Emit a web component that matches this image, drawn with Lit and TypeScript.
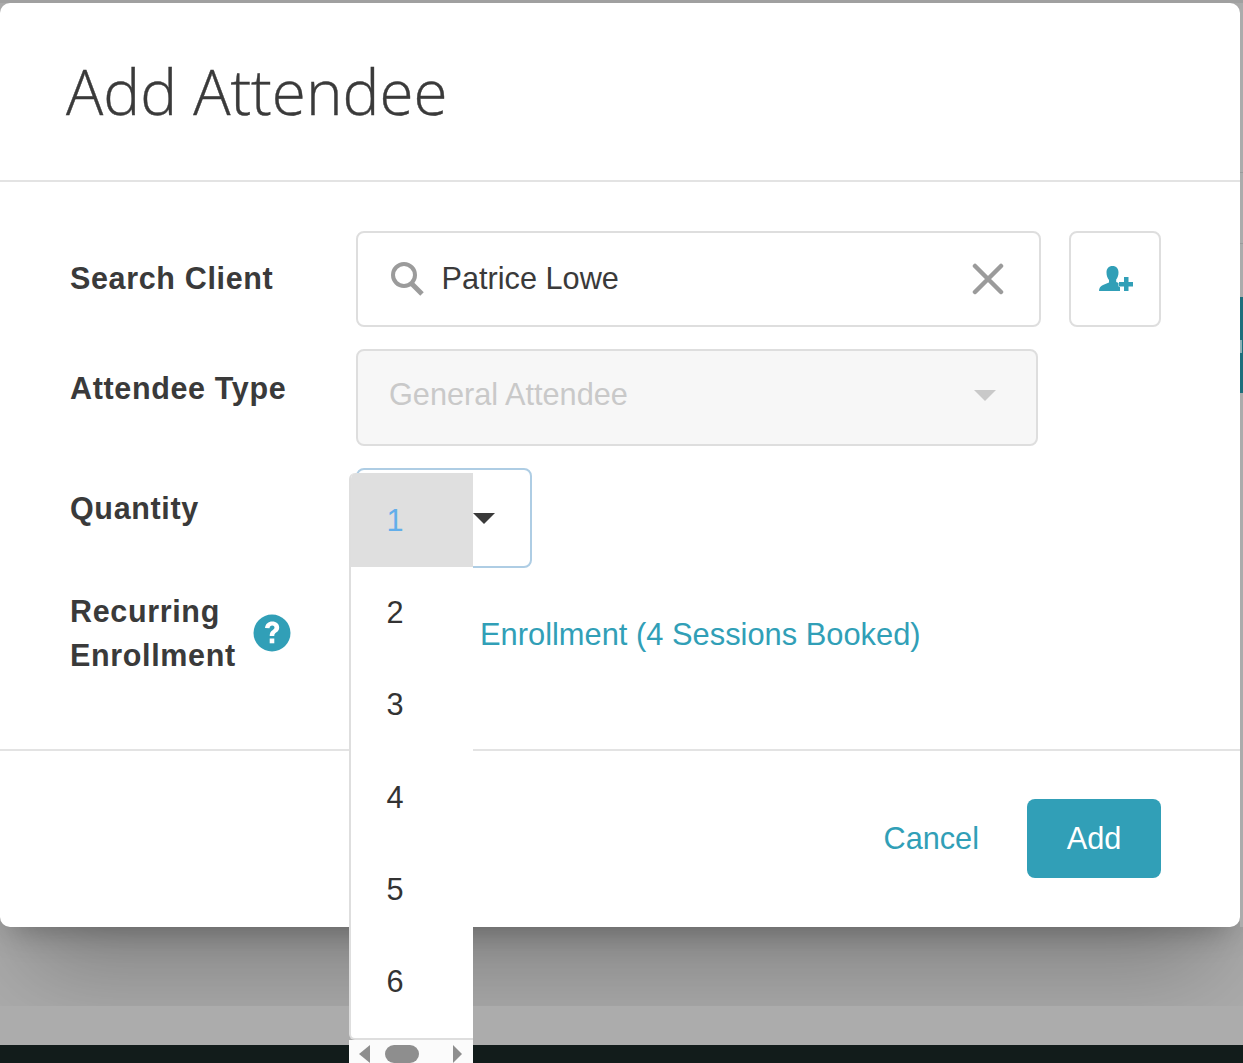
import { LitElement, css, html } from 'lit'
import { customElement } from 'lit/decorators.js'

const QUANTITIES = [1, 2, 3, 4, 5, 6]

@customElement('app-root')
export class AppRoot extends LitElement {
  static styles = css`
    :host {
      display: block;
      position: relative;
      width: 1243px;
      height: 1063px;
      overflow: hidden;
      background: #acacac;
      font-family: 'Liberation Sans', Arial, sans-serif;
      color: #3a3a3a;
    }

    .page {
      display: flex;
      flex-direction: column;
      height: 100%;
      padding-top: 3px;
      box-sizing: border-box;
    }

    .modal {
      position: relative;
      z-index: 1;
      width: 1240px;
      height: 924px;
      flex: none;
      box-sizing: border-box;
      background: #fff;
      border-radius: 10px;
      box-shadow:
        0 12px 30px -10px rgba(0, 0, 0, 0.3),
        0 70px 90px -25px rgba(0, 0, 0, 0.24);
      display: flex;
      flex-direction: column;
    }

    .spacer {
      flex: none;
      height: 79px;
    }

    .band {
      position: relative;
      z-index: 2;
      flex: none;
      height: 39px;
      background: #acacac;
    }

    .base {
      position: relative;
      z-index: 2;
      flex: 1;
      background: #121c1b;
    }

    .top-edge {
      position: absolute;
      z-index: 2;
      top: 0;
      left: 0;
      right: 0;
      height: 3px;
      background: #a0a0a0;
    }

    .edge {
      position: absolute;
      z-index: 2;
      top: 3px;
      right: 0;
      width: 3px;
      height: 924px;
      background:
        linear-gradient(#8fb0b6, #8fb0b6) 0 337px / 2px 13px no-repeat,
        linear-gradient(#1c6f7c, #1c6f7c) 0 294px / 3px 96px no-repeat,
        linear-gradient(#9a9a9a, #9a9a9a) 0 169px / 3px 1px no-repeat,
        linear-gradient(#9a9a9a, #9a9a9a) 0 240px / 3px 1px no-repeat,
        #acacac;
    }

    header {
      height: 179px;
      flex: none;
      box-sizing: border-box;
      border-bottom: 2px solid #e3e3e3;
      padding: 51px 0 0 66px;
    }

    h1 {
      margin: 0;
      font-family: 'Open Sans', sans-serif;
      font-weight: 300;
      font-size: 62px;
      line-height: 74px;
      color: #3a3a3a;
      -webkit-text-stroke: 0.4px #3a3a3a;
    }

    .body {
      height: 569px;
      flex: none;
      box-sizing: border-box;
      border-bottom: 2px solid #e3e3e3;
      padding: 49px 79px 0 70px;
      display: flex;
      flex-direction: column;
    }

    .row {
      display: flex;
      align-items: flex-start;
    }

    .label {
      width: 286px;
      flex: none;
      font-size: 30.5px;
      font-weight: 700;
      letter-spacing: 0.65px;
      line-height: 44px;
      color: #3a3a3a;
    }

    .search-row {
      height: 118px;
    }

    .search-row .label {
      padding-top: 25px;
    }

    .search {
      width: 685px;
      height: 96px;
      box-sizing: border-box;
      border: 2px solid #dedede;
      border-radius: 8px;
      display: flex;
      align-items: center;
      padding: 0 35px 0 31px;
      font-size: 30.7px;
    }

    .search .name {
      flex: 1;
      margin-left: 16.5px;
    }

    .add-client {
      width: 92px;
      height: 96px;
      margin-left: 28px;
      box-sizing: border-box;
      border: 2px solid #dedede;
      border-radius: 8px;
      display: flex;
      align-items: center;
      justify-content: center;
    }

    .add-client svg {
      margin-left: 2px;
      margin-top: -1px;
    }

    .type-row {
      height: 119px;
    }

    .type-row .label {
      padding-top: 17px;
    }

    .type {
      width: 682px;
      height: 97px;
      box-sizing: border-box;
      border: 2px solid #dedede;
      border-radius: 8px;
      background: #f7f7f7;
      color: #c9c9c9;
      font-size: 30.7px;
      display: flex;
      align-items: center;
      justify-content: space-between;
      padding: 0 40px 6px 31px;
    }

    .type .caret {
      margin-top: 2px;
    }

    .caret {
      width: 0;
      height: 0;
      border-left: 11px solid transparent;
      border-right: 11px solid transparent;
      border-top: 11px solid #c9c9c9;
    }

    .quantity-row {
      height: 121px;
    }

    .quantity-row .label {
      padding-top: 18px;
    }

    .quantity {
      width: 176px;
      height: 100px;
      box-sizing: border-box;
      border: 2px solid #aecde4;
      border-radius: 8px;
      display: flex;
      align-items: center;
      justify-content: flex-end;
      padding-right: 35px;
    }

    .quantity .caret {
      border-top-color: #3a3a3a;
    }

    .recurring-row .label {
      display: flex;
      align-items: center;
      gap: 16px;
    }

    .recurring-row .link {
      margin: 24px 0 0 124px;
      font-size: 30.85px;
      line-height: 44px;
      color: #319fb7;
    }

    .recurring-text {
      width: 167px;
    }

    .help {
      flex: none;
      margin-top: -1px;
    }

    footer {
      flex: 1;
      display: flex;
      justify-content: flex-end;
      align-items: flex-start;
      padding: 48px 79px 0 0;
    }

    .cancel {
      font-size: 30.7px;
      line-height: 79px;
      color: #319fb7;
      margin-right: 48px;
    }

    .add {
      width: 134px;
      height: 79px;
      background: #319fb7;
      border-radius: 8px;
      color: #fff;
      font-size: 30.7px;
      display: flex;
      align-items: center;
      justify-content: center;
    }

    .menu {
      position: absolute;
      z-index: 3;
      left: 349px;
      top: 473px;
      width: 124px;
      display: flex;
      flex-direction: column;
    }

    .list {
      height: 567px;
      box-sizing: border-box;
      background: #fff;
      border-left: 2px solid #dedede;
      border-bottom: 2px solid #dedede;
      border-radius: 6px 0 0 6px;
      font-size: 30.7px;
      color: #333;
      overflow: hidden;
    }

    .item {
      height: 92.3px;
      box-sizing: border-box;
      padding: 0 0 0 35.5px;
      display: flex;
      align-items: center;
    }

    .item.selected {
      height: 94px;
      background: #dfdfdf;
      color: #62aeea;
      margin-left: -2px;
      padding: 2px 0 0 37.5px;
    }

    .scrollbar {
      height: 23px;
      background: #fbfbfb;
    }

    .scrollbar svg {
      display: block;
    }
  `

  render() {
    return html`
      <div class="page">
        <div class="modal">
          <header><h1>Add Attendee</h1></header>
          <div class="body">
            <div class="row search-row">
              <div class="label">Search Client</div>
              <div class="search">
                <svg width="36" height="36" viewBox="0 0 36 36" fill="none" stroke="#9b9b9b">
                  <circle cx="15" cy="14" r="11" stroke-width="4" />
                  <path d="M23 23l10 10" stroke-width="5" />
                </svg>
                <span class="name">Patrice Lowe</span>
                <svg width="32" height="32" viewBox="0 0 32 32" stroke="#9b9b9b" stroke-width="4.500" stroke-linecap="round">
                  <path d="M3 3l26 26M29 3L3 29" />
                </svg>
              </div>
              <div class="add-client">
                <svg width="34" height="25" viewBox="0 0 34 25" fill="#319fb7">
                  <path d="M13.500 0c3.800 0 6 2.500 6 6.500 0 3-1 5.500-2.300 7v2.500l3.800 1.500v7.500H0c0-3 1.500-5 4-6l6-2.500v-2.500C8.500 12 7.500 9.500 7.500 6.500 7.500 2.500 9.700 0 13.500 0z" />
                  <path d="M25 11h4.500v5H34v4.500h-4.500V25H25v-4.500h-5V16h5z" stroke="#fff" stroke-width="1" paint-order="stroke" />
                </svg>
              </div>
            </div>
            <div class="row type-row">
              <div class="label">Attendee Type</div>
              <div class="type"><span>General Attendee</span><span class="caret"></span></div>
            </div>
            <div class="row quantity-row">
              <div class="label">Quantity</div>
              <div class="quantity"><span class="caret"></span></div>
            </div>
            <div class="row recurring-row">
              <div class="label">
                <span class="recurring-text">Recurring Enrollment</span>
                <svg class="help" width="38" height="38" viewBox="0 0 38 38">
                  <circle cx="19" cy="19" r="18.500" fill="#319fb7" />
                  <path d="M12 14c.5-4.300 3.400-6.500 7.200-6.500 4.200 0 7 2.400 7 5.900 0 2.500-1.300 3.900-3.100 5.200-1.300 1-1.800 1.600-1.800 3.400h-4.600c0-3.100.9-4.400 2.800-5.800 1.400-1 2-1.700 2-2.600 0-1.200-1-2-2.300-2-1.500 0-2.500.9-2.700 2.700z" fill="#fff" />
                  <rect x="16.700" y="24.500" width="4.600" height="4.800" fill="#fff" />
                </svg>
              </div>
              <div class="link">Enrollment (4 Sessions Booked)</div>
            </div>
          </div>
          <footer>
            <span class="cancel">Cancel</span>
            <span class="add">Add</span>
          </footer>
        </div>
        <div class="spacer"></div>
        <div class="band"></div>
        <div class="base"></div>
      </div>
      <div class="top-edge"></div>
      <div class="edge"></div>
      <div class="menu">
        <div class="list">
          ${QUANTITIES.map(
            (q) => html`<div class="item ${q === 1 ? 'selected' : ''}">${q}</div>`
          )}
        </div>
        <div class="scrollbar">
          <svg width="124" height="23" viewBox="0 0 124 23" fill="#8e8e8e">
            <path d="M21 5v18L10 14z" />
            <rect x="36" y="5" width="34" height="18" rx="9" />
            <path d="M104 5v18l9-9z" />
          </svg>
        </div>
      </div>
    `
  }
}

declare global {
  interface HTMLElementTagNameMap {
    'app-root': AppRoot
  }
}
